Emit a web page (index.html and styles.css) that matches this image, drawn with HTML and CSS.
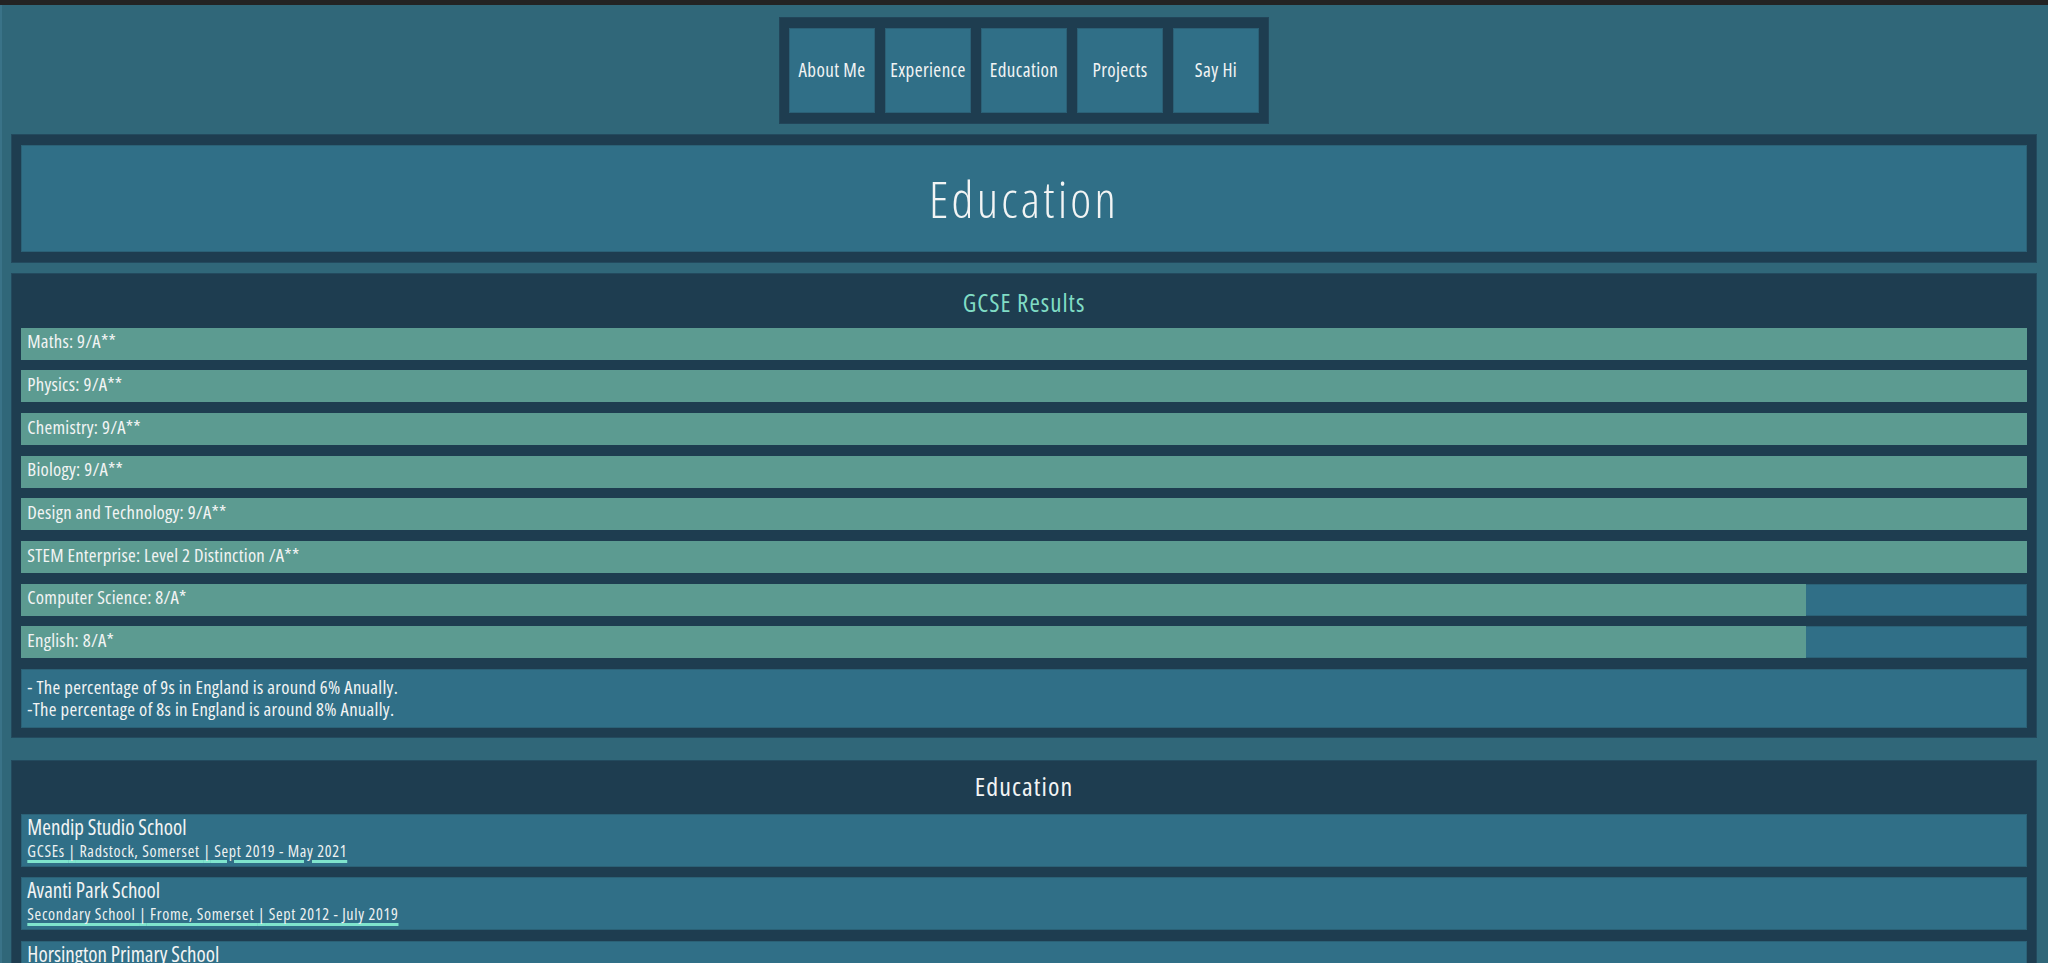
FILE: index.html
```html
<!DOCTYPE html>
<html lang="en">
<head>
<meta charset="utf-8">
<title>Education</title>
<link rel="stylesheet" href="styles.css">
</head>
<body>
<div class="topbar"></div>
<div class="page">
  <nav class="nav">
    <a class="nav-btn" href="#">About Me</a>
    <a class="nav-btn" href="#">Experience</a>
    <a class="nav-btn" href="#">Education</a>
    <a class="nav-btn" href="#">Projects</a>
    <a class="nav-btn" href="#">Say Hi</a>
  </nav>

  <header class="panel heading-panel">
    <div class="heading-inner"><h1 class="page-title">Education</h1></div>
  </header>

  <section class="panel gcse">
    <h2 class="section-title mint">GCSE Results</h2>
    <div class="bars">
      <div class="bar"><div class="fill" style="width:100%"></div><span class="bar-label">Maths: 9/A**</span></div>
      <div class="bar"><div class="fill" style="width:100%"></div><span class="bar-label">Physics: 9/A**</span></div>
      <div class="bar"><div class="fill" style="width:100%"></div><span class="bar-label">Chemistry: 9/A**</span></div>
      <div class="bar"><div class="fill" style="width:100%"></div><span class="bar-label">Biology: 9/A**</span></div>
      <div class="bar"><div class="fill" style="width:100%"></div><span class="bar-label">Design and Technology: 9/A**</span></div>
      <div class="bar"><div class="fill" style="width:100%"></div><span class="bar-label">STEM Enterprise: Level 2 Distinction /A**</span></div>
      <div class="bar"><div class="fill" style="width:89%"></div><span class="bar-label">Computer Science: 8/A*</span></div>
      <div class="bar"><div class="fill" style="width:89%"></div><span class="bar-label">English: 8/A*</span></div>
      <div class="note">
        <p>- The percentage of 9s in England is around 6% Anually.</p>
        <p>-The percentage of 8s in England is around 8% Anually.</p>
      </div>
    </div>
  </section>

  <section class="panel schools">
    <h2 class="section-title edu-title">Education</h2>
    <div class="cards">
      <div class="card">
        <div class="card-title">Mendip Studio School</div>
        <div class="card-sub">GCSEs <span class="sep">|</span> Radstock, Somerset <span class="sep">|</span> Sept 2019 - May 2021</div>
      </div>
      <div class="card">
        <div class="card-title">Avanti Park School</div>
        <div class="card-sub">Secondary School <span class="sep">|</span> Frome, Somerset <span class="sep">|</span> Sept 2012 - July 2019</div>
      </div>
      <div class="card">
        <div class="card-title">Horsington Primary School</div>
        <div class="card-sub">Primary School <span class="sep">|</span> Horsington, Somerset <span class="sep">|</span> Sept 2005 - July 2012</div>
      </div>
    </div>
  </section>
</div>
</body>
</html>
```
FILE: styles.css
```css
* { box-sizing: border-box; }

html, body {
  margin: 0;
  padding: 0;
}

body {
  background: #306779;
  color: #f2f4f4;
  font-family: "Open Sans", "Roboto", sans-serif;
  font-stretch: 75%;
  overflow: hidden;
  height: 963px;
}

.topbar {
  height: 5px;
  background: #232323;
}

.page {
  padding: 12px 10.67px 0;
  box-shadow: inset 2px 0 0 #3a7388;
  height: 958px;
}

.nav {
  display: flex;
  gap: 10.67px;
  width: max-content;
  margin: 0 auto;
  padding: 10.67px;
  background: #1e3d50;
  box-shadow: inset 0 0 0 1px #224559;
}

.nav-btn {
  width: 85.33px;
  height: 85.33px;
  display: flex;
  align-items: center;
  justify-content: center;
  background: #306f87;
  box-shadow: inset 0 0 0 1px #2b6076;
  color: #f2f4f4;
  text-decoration: none;
  font-size: 19px;
  letter-spacing: 0.4px;
  padding-bottom: 1px;
}

.panel {
  background: #1e3d50;
  box-shadow: inset 0 0 0 1px #234a5e;
  padding: 10.67px;
}

.heading-panel {
  margin-top: 10.67px;
}

.heading-inner {
  height: 107px;
  background: #306f87;
  box-shadow: inset 0 0 0 1px #2b6176;
  display: flex;
  align-items: center;
  justify-content: center;
}

.page-title {
  margin: 0;
  font-weight: 300;
  font-size: 50px;
  letter-spacing: 3.2px;
  padding-top: 2px;
}

.gcse {
  margin-top: 10.67px;
}

.section-title {
  margin: 0;
  height: 33px;
  line-height: 36px;
  text-align: center;
  font-weight: normal;
  font-size: 25px;
}

.mint {
  color: #80dcc5;
  letter-spacing: 1px;
}

.edu-title {
  letter-spacing: 1.1px;
  font-size: 26px;
}

.bars {
  display: flex;
  flex-direction: column;
  gap: 10.67px;
  margin-top: 10.67px;
}

.bar {
  position: relative;
  height: 32px;
  background: #306f87;
  box-shadow: inset 0 0 0 1px #2b6176;
  display: flex;
  align-items: center;
  padding: 0 6px 4px;
}

.fill {
  position: absolute;
  left: 0;
  top: 0;
  bottom: 0;
  background: #5c9b91;
}

.bar-label {
  position: relative;
  font-size: 18.7px;
  line-height: 1.2;
  letter-spacing: 0.25px;
}

.note {
  height: 59px;
  background: #306f87;
  box-shadow: inset 0 0 0 1px #2b6176;
  padding: 7px 6px;
  font-size: 18.7px;
  line-height: 22.5px;
  letter-spacing: 0.3px;
}

.note p { margin: 0; }

.schools {
  margin-top: 21.33px;
}

.schools .section-title {
  height: 32.67px;
  line-height: 33px;
}

.cards {
  display: flex;
  flex-direction: column;
  gap: 10.67px;
  margin-top: 10.67px;
}

.card {
  height: 53px;
  background: #306f87;
  box-shadow: inset 0 0 0 1px #2b6176;
  padding: 0 6px;
}

.card-title {
  font-size: 21px;
  line-height: 26px;
}

.card-sub {
  font-size: 16px;
  line-height: 22px;
  letter-spacing: 0.7px;
  color: #eef2f2;
  text-decoration: underline;
  text-decoration-color: #7fe5cd;
  text-decoration-thickness: 2.67px;
  text-underline-offset: 3px;
  text-decoration-skip-ink: auto;
}

.sep {
  text-decoration: underline;
  text-decoration-color: #7fe5cd;
  text-decoration-thickness: 2.67px;
  text-underline-offset: 3px;
  text-decoration-skip-ink: none;
}
```
